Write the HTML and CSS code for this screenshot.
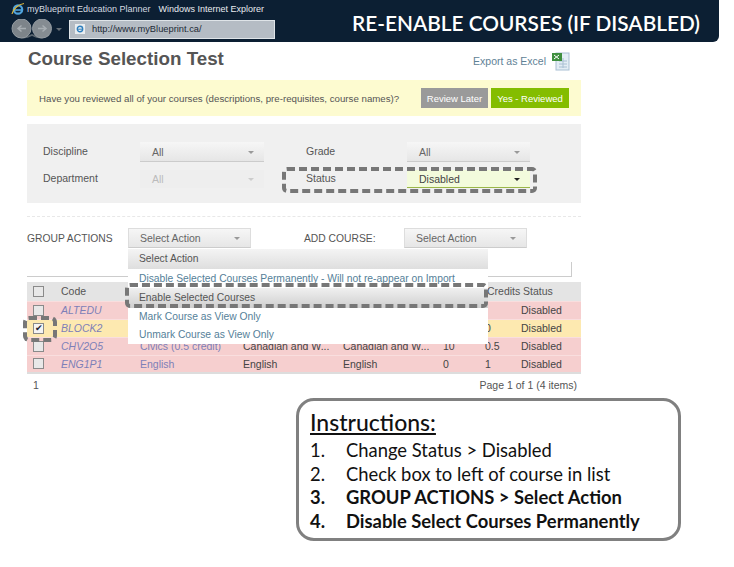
FILE: index.html
```html
<!DOCTYPE html>
<html lang="en">
<head>
  <meta charset="UTF-8" />
  <title>Re-enable courses</title>
  <link rel="stylesheet" href="styles.css">
</head>
<body>

  <!-- Browser title bar -->
  <header class="topbar">
    <div class="browser">
      <div class="browser-title">
        <svg class="ie-logo" viewBox="0 0 14 14" width="14" height="14">
          <circle cx="7" cy="7.5" r="4.2" fill="none" stroke="#4fa3dc" stroke-width="2.2"/>
          <path d="M3 8h8" stroke="#4fa3dc" stroke-width="1.6"/>
          <path d="M1 12C2 7 8 2 13 1.500" fill="none" stroke="#e0b93c" stroke-width="1.200"/>
        </svg>
        <span>myBlueprint Education Planner</span>
        <span class="browser-app">Windows Internet Explorer</span>
      </div>
      <div class="browser-nav">
        <div class="nav-buttons">
          <svg viewBox="0 0 42 20" width="42" height="20">
            <path d="M4 16q8 5 17 0q9 5 17 0" fill="none" stroke="#5b6670" stroke-width="2"/>
            <circle cx="10.500" cy="9.500" r="9.500" fill="#7d848a" stroke="#969da3"/>
            <circle cx="31" cy="9.500" r="9.500" fill="#858c92" stroke="#969da3"/>
            <path d="M15 9.500H7M10.500 6.500l-3.500 3 3.500 3" fill="none" stroke="#a8aeb3" stroke-width="1.500"/>
            <path d="M27 9.500h8M31.500 6.500l3.500 3-3.500 3" fill="none" stroke="#a8aeb3" stroke-width="1.500"/>
          </svg>
          <span class="nav-caret"></span>
        </div>
        <div class="address">
          <svg viewBox="0 0 10 10" width="10" height="10">
            <rect width="10" height="10" fill="#e9edf0"/>
            <circle cx="5" cy="5" r="2.700" fill="none" stroke="#2f7fbd" stroke-width="1.400"/>
            <path d="M2.500 5.200h5" stroke="#2f7fbd"/>
          </svg>
          <span>http://www.myBlueprint.ca/</span>
        </div>
      </div>
    </div>
    <h1>RE-ENABLE COURSES (IF DISABLED)</h1>
  </header>

  <main class="page">
    <div class="page-head">
      <h2>Course Selection Test</h2>
      <a class="export" href="#">
        Export as Excel
        <svg viewBox="0 0 19 19" width="19" height="19">
          <rect x="5" y="1" width="13" height="17" fill="#e3edf5" stroke="#a9c0d3"/>
          <path d="M8 9h8M8 12h8M8 15h8M12 6v10" stroke="#a9c0d3"/>
          <rect x="1" y="1" width="10" height="8" fill="#3f8f3f"/>
          <path d="M3 3l5 4M8 3L3 7" stroke="#fff"/>
        </svg>
      </a>
    </div>

    <div class="notice">
      <p>Have you reviewed all of your courses (descriptions, pre-requisites, course names)?</p>
      <div class="notice-buttons">
        <button class="btn btn-later">Review Later</button>
        <button class="btn btn-yes">Yes - Reviewed</button>
      </div>
    </div>

    <section class="filters">
      <span class="filter-label">Discipline</span>
      <div class="select">All</div>
      <span class="filter-label grade-label">Grade</span>
      <div class="select">All</div>
      <span class="filter-label">Department</span>
      <div class="select select-off">All</div>
      <span class="filter-label grade-label">Status</span>
      <div class="select select-on">Disabled</div>
    </section>

    <div class="divider"></div>

    <div class="actions">
      <span class="group-label">GROUP ACTIONS</span>
      <div class="select action-select">Select Action</div>
      <span class="add-label">ADD COURSE:</span>
      <div class="select action-select">Select Action</div>
    </div>

    <div class="behind-box"></div>

    <table class="courses">
      <colgroup>
        <col class="c-check"><col class="c-code"><col class="c-name"><col class="c-desc"><col class="c-type"><col class="c-hours"><col class="c-credits"><col>
      </colgroup>
      <thead>
        <tr>
          <th><span class="check"></span></th><th>Code</th><th></th><th></th><th></th><th></th><th class="credits-head">Credits</th><th class="status-head">Status</th>
        </tr>
      </thead>
      <tbody>
        <tr>
          <td><span class="check"></span></td><td class="code">ALTEDU</td><td></td><td></td><td></td><td></td><td></td><td>Disabled</td>
        </tr>
        <tr class="picked">
          <td><span class="check checked">✔</span></td><td class="code">BLOCK2</td><td></td><td></td><td></td><td></td><td>0</td><td>Disabled</td>
        </tr>
        <tr>
          <td><span class="check"></span></td><td class="code">CHV2O5</td><td class="link">Civics (0.5 credit)</td><td>Canadian and W...</td><td>Canadian and W...</td><td>10</td><td>0.5</td><td>Disabled</td>
        </tr>
        <tr>
          <td><span class="check"></span></td><td class="code">ENG1P1</td><td class="link">English</td><td>English</td><td>English</td><td>0</td><td>1</td><td>Disabled</td>
        </tr>
      </tbody>
    </table>

    <div class="pager">
      <span>1</span>
      <span>Page 1 of 1 (4 items)</span>
    </div>

    <!-- Open Select Action menu -->
    <ul class="menu">
      <li class="menu-head">Select Action</li>
      <li>Disable Selected Courses Permanently - Will not re-appear on Import</li>
      <li class="menu-hover">Enable Selected Courses</li>
      <li>Mark Course as View Only</li>
      <li>Unmark Course as View Only</li>
    </ul>

    <!-- Dashed highlights -->
    <div class="mark mark-status"></div>
    <div class="mark mark-enable"></div>
    <div class="mark mark-check"></div>
  </main>

  <section class="instructions">
    <h3>Instructions:</h3>
    <ol>
      <li>Change Status &gt; Disabled</li>
      <li>Check box to left of course in list</li>
      <li class="strong">GROUP ACTIONS &gt; Select Action</li>
      <li class="strong">Disable Select Courses Permanently</li>
    </ol>
  </section>

</body>
</html>
```

FILE: styles.css
```css
/* Reset and base */
* {
  margin: 0;
  padding: 0;
  box-sizing: border-box;
}

body {
  background: #fff;
  font-family: 'Liberation Sans', Arial, sans-serif;
  color: #444;
}

/* Top bar */
.topbar {
  width: 719px;
  height: 42px;
  background: #0c1f33;
  border-radius: 0 0 6px 0;
  display: flex;
  justify-content: space-between;
}

.browser {
  padding: 2px 0 0 11px;
}

.browser-title {
  display: flex;
  align-items: center;
  gap: 2px;
  height: 14px;
  font-size: 9px;
  color: #d5dbe0;
}

.browser-app {
  margin-left: 6px;
  color: #e8ecef;
}

.browser-nav {
  display: flex;
  align-items: center;
  margin-top: 3px;
}

.nav-buttons {
  display: flex;
  align-items: center;
  width: 58px;
}

.nav-caret {
  margin-left: 3px;
  border: 3px solid transparent;
  border-top-color: #666f77;
  border-bottom: 0;
}

.address {
  width: 206px;
  height: 19px;
  background: #b5bcc4;
  border: 1px solid #dfe4e8;
  display: flex;
  align-items: center;
  gap: 7px;
  padding-left: 5px;
  font-size: 9.300px;
  color: #1d2a36;
}

.topbar h1 {
  margin: 9px 19px 0 0;
  font-family: Lato, sans-serif;
  font-size: 20.800px;
  font-weight: 600;
  line-height: 28px;
  color: #fff;
  white-space: nowrap;
}

/* Page */
.page {
  position: relative;
  width: 554px;
  margin-left: 27px;
}

.page-head {
  height: 38px;
  display: flex;
  justify-content: space-between;
  align-items: center;
}

.page-head h2 {
  font-size: 18.800px;
  font-weight: 700;
  color: #555;
  padding: 0 0 5px 1px;
}

.export {
  display: flex;
  align-items: center;
  gap: 5px;
  margin-right: 11px;
  font-size: 10.500px;
  color: #5f8296;
  text-decoration: none;
}

.notice {
  height: 36px;
  background: #fdfbd0;
  display: flex;
  justify-content: space-between;
  align-items: center;
  padding: 0 12px;
  font-size: 9.700px;
  color: #555;
}

.notice-buttons {
  display: flex;
  gap: 3px;
}

.btn {
  height: 20px;
  border: 0;
  font-family: inherit;
  font-size: 9.500px;
  color: #fff;
}

.btn-later {
  width: 67px;
  background: #9a9a9a;
}

.btn-yes {
  width: 78px;
  background: #84bd00;
}

/* Filters */
.filters {
  margin-top: 8px;
  height: 79px;
  background: #f0f0f0;
  display: grid;
  grid-template-columns: 113px 124px 143px 123px;
  grid-template-rows: 20px 18px;
  row-gap: 8px;
  align-items: center;
  padding: 18px 0 0 0;
  font-size: 10.500px;
}

.filter-label {
  padding: 0 0 2px 16px;
  color: #555;
}

.filter-label.grade-label {
  padding-left: 42px;
}

.select {
  position: relative;
  height: 100%;
  display: flex;
  align-items: center;
  padding-left: 12px;
  background: linear-gradient(#f6f6f6, #e6e6e6);
  border-bottom: 1px solid #ccc;
  font-size: 10.500px;
  color: #666;
}

.select::after {
  content: "";
  position: absolute;
  right: 10px;
  top: 50%;
  margin-top: -1px;
  border: 3px solid transparent;
  border-top-color: #999;
  border-bottom: 0;
}

.select-off {
  background: #eee;
  border-bottom: 0;
  color: #bbb;
}

.select-off::after {
  border-top-color: #ccc;
}

.select-on {
  background: #f3fbdc;
  border-bottom: 1px solid #9ab648;
  color: #444;
}

.select-on::after {
  border-top-color: #222;
}

.divider {
  height: 0;
  margin-top: 13px;
  border-top: 1px dashed #e8e8e8;
}

/* Actions row */
.actions {
  margin-top: 11px;
  height: 20px;
  display: flex;
  align-items: center;
  font-size: 10.300px;
  color: #555;
}

.group-label {
  width: 101px;
}

.action-select {
  width: 123px;
  padding-left: 11px;
  border: 1px solid #ddd;
  border-bottom: 1px solid #ccc;
}

.add-label {
  width: 153px;
  padding-left: 53px;
}

.behind-box {
  width: 545px;
  height: 15px;
  margin-top: 14px;
  border-right: 1px solid #ccc;
  border-bottom: 1px solid #ccc;
}

/* Course table */
.courses {
  width: 554px;
  margin-top: 5px;
  border-collapse: collapse;
  table-layout: fixed;
  border-bottom: 2px solid #ddd;
  font-size: 10.500px;
}

.c-check { width: 31px; }
.c-code { width: 79px; }
.c-name { width: 103px; }
.c-desc { width: 100px; }
.c-type { width: 100px; }
.c-hours { width: 42px; }
.c-credits { width: 36px; }

.courses th {
  height: 19px;
  background: #e4e4e4;
  text-align: left;
  font-weight: 400;
  padding-left: 3px;
  color: #555;
}

.courses th:first-child,
.courses td:first-child {
  padding-left: 6px;
}

.courses th.credits-head {
  padding-left: 5px;
  white-space: nowrap;
}

.courses th.status-head {
  padding-left: 5px;
}

.courses td {
  height: 18px;
  background: #f6cfcf;
  border-top: 1px solid #f9dede;
  padding-left: 3px;
  white-space: nowrap;
  overflow: hidden;
}

.courses .picked td {
  background: #fde9b0;
}

.check {
  display: block;
  width: 11px;
  height: 11px;
  background: #e8e8e8;
  border: 1px solid #8a8a8a;
  font-size: 9px;
  line-height: 9px;
  text-align: center;
}

.check.checked {
  background: #f4f4f4;
  color: #223;
}

.code {
  font-style: italic;
  color: #7d7fb8;
}

.link {
  color: #7d7fb8;
}

.pager {
  display: flex;
  justify-content: space-between;
  padding: 5px 4px 0 6px;
  font-size: 10.500px;
  color: #555;
}

/* Select Action menu */
.menu {
  position: absolute;
  left: 101px;
  top: 207px;
  width: 360px;
  height: 95px;
  background: #fff;
  list-style: none;
  font-size: 10.300px;
  color: #557f99;
}

.menu li {
  height: 18px;
  line-height: 18px;
  padding-left: 11px;
}

.menu .menu-head {
  height: 20px;
  line-height: 20px;
  margin-bottom: 1px;
  background: linear-gradient(#f4f4f4, #dedede);
  color: #555;
}

.menu .menu-hover {
  height: 20px;
  line-height: 20px;
  background: linear-gradient(#f0f0f0, #cfcfcf);
  color: #555;
}

/* Dashed highlights */
.mark {
  position: absolute;
  border: 4px dashed #777;
  border-radius: 5px;
}

.mark-status {
  left: 255px;
  top: 125px;
  width: 255px;
  height: 26px;
}

.mark-enable {
  left: 98px;
  top: 241px;
  width: 363px;
  height: 25px;
}

.mark-check {
  left: -4px;
  top: 274px;
  width: 34px;
  height: 26px;
  border-radius: 6px;
}

/* Instructions box */
.instructions {
  width: 385px;
  height: 143px;
  margin: 7px 0 0 296px;
  padding: 8px 0 0 11px;
  border: 3px solid #808080;
  border-radius: 18px;
  font-family: Lato, sans-serif;
  color: #111;
}

.instructions h3 {
  font-size: 23px;
  font-weight: 500;
  line-height: 26px;
  text-decoration: underline;
  margin-bottom: 4px;
}

.instructions ol {
  list-style: none;
  counter-reset: step;
  font-size: 18.400px;
  line-height: 23.700px;
}

.instructions li {
  counter-increment: step;
  display: flex;
}

.instructions li::before {
  content: counter(step) ".";
  width: 36px;
}

.instructions .strong {
  font-weight: 700;
}
```
